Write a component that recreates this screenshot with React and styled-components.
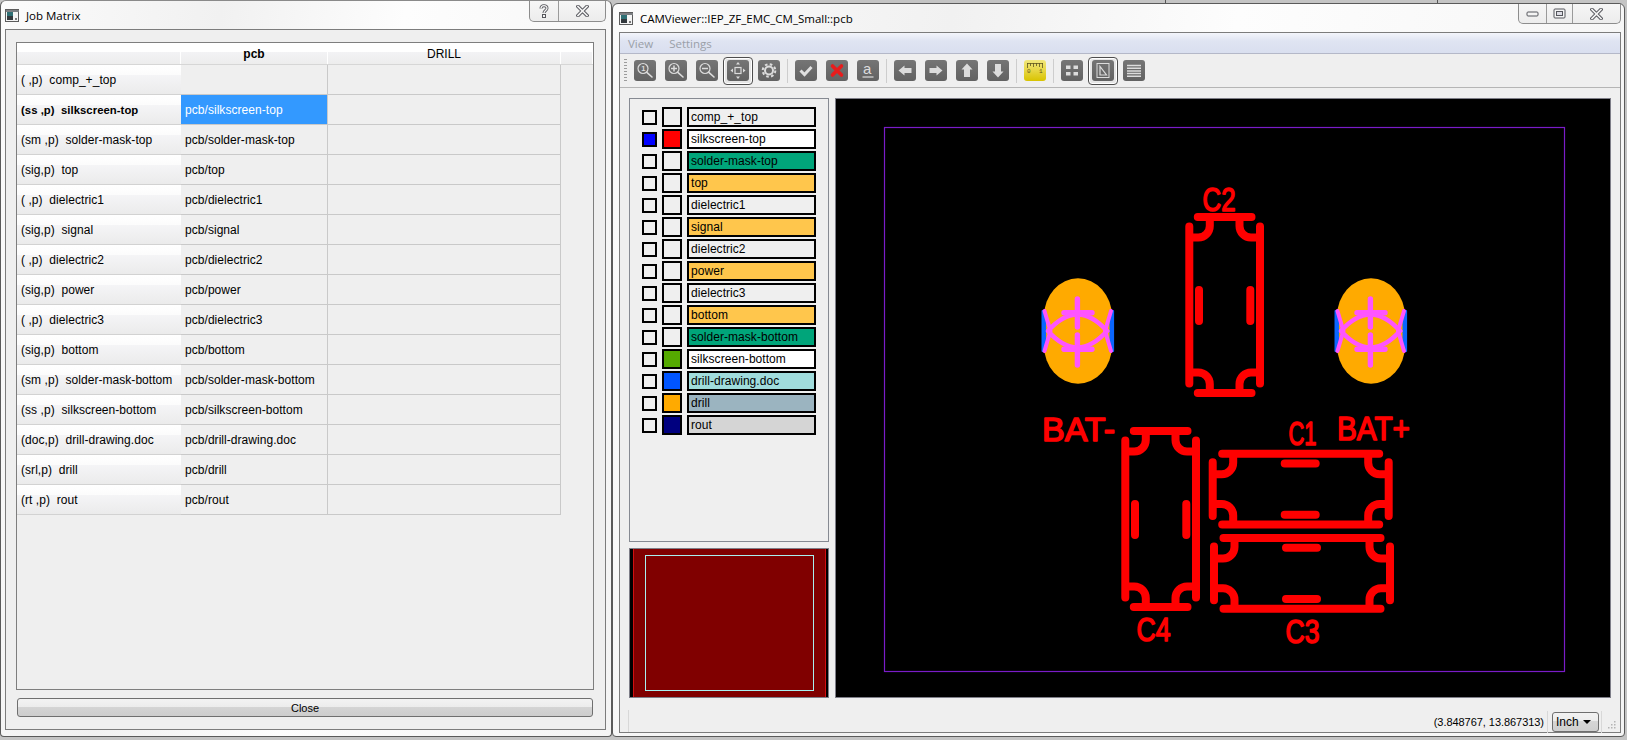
import React from "react";
import styled, { createGlobalStyle } from "styled-components";

const Global = createGlobalStyle`
  html, body { margin: 0; padding: 0; width: 1627px; height: 740px; overflow: hidden; }
  body { font-family: "Liberation Sans", Arial, sans-serif; font-size: 12px; color: #000; }
`;

const Desktop = styled.div`
  width: 1627px; height: 740px; display: flex; align-items: flex-start; overflow: hidden;
  background:
    linear-gradient(#555, #555) 1437px 0 / 1px 3px no-repeat,
    linear-gradient(#555, #555) 1165px 0 / 1px 3px no-repeat,
    #c4c4c4;
`;
const Win = styled.div`
  box-sizing: border-box;
  border: 1px solid #5a5a5a;
  border-radius: 6px 6px 4px 4px;
  background: linear-gradient(100deg, #fbfbfb 0%, #f1f1f1 30%, #fdfdfd 55%, #f4f4f4 100%);
  display: flex; flex-direction: column;
`;
const JobWin = styled(Win)`
  width: 612px; height: 737px; padding: 0 5px 6px 4px;
  border-top-color: #8a8a8a;
`;
const CamWin = styled(Win)`
  width: 1013px; height: 734px; margin-top: 3px; padding: 0 3px 3px 6px; margin-left: 0;
`;
const TitleBar = styled.div`
  height: 28px; display: flex; align-items: center; gap: 6px; flex: none; position: relative;
  font-family: "Open Sans", sans-serif; font-size: 11.5px; color: #000;
`;
const TitleText = styled.span`
  flex: 1;
`;
const CaptionGroup = styled.div`
  display: flex; align-self: flex-start; height: ${p => p.$h}px;
  border: 1px solid #8d8d8d; border-top: none; border-radius: 0 0 5px 5px;
  background: linear-gradient(#f6f6f6, #ececec);
`;
const CaptionBtn = styled.div`
  width: ${p => p.$w}px; display: flex; align-items: center; justify-content: center;
  border-left: ${p => (p.$first ? "none" : "1px solid #9a9a9a")};
`;
const Frame = styled.div`
  flex: 1; min-height: 0; box-sizing: border-box; background: #efefef; border: 1px solid #7c7c7c;
  display: flex; flex-direction: column;
`;
const JobFrame = styled(Frame)`
  padding: 12px 11px 12px 10px;
`;
const Matrix = styled.div`
  height: 648px; box-sizing: border-box; border: 1px solid #7e7e7e; background: #efefef; flex: none;
`;
const HeadRow = styled.div`
  display: grid; grid-template-columns: 164px 147px 233px 1fr; height: 21px;
  border-bottom: 1px solid #d6d6d6;
`;
const HeadCell = styled.div`
  display: flex; align-items: center; justify-content: center;
  font-weight: ${p => (p.$bold ? 700 : 400)};
  border-right: 1px solid #fff;
  background: linear-gradient(#ffffff 0, #ffffff 42%, #f3f3f5 42%, #ededed 100%);
`;
const MatRow = styled.div`
  display: grid; grid-template-columns: 164px 147px 233px; height: 30px;
`;
const RowHead = styled.div`
  display: flex; align-items: center; padding-left: 4px; white-space: pre; letter-spacing: 0.05px;
  font-weight: ${p => (p.$bold ? 700 : 400)};
  font-size: ${p => (p.$bold ? 11.3 : 12)}px;
  border-bottom: 1px solid #d2d2d2;
  background: linear-gradient(#ffffff 0, #fcfcfc 33%, #f5f5f7 33%, #ebebeb 100%);
`;
const Cell = styled.div`
  display: flex; align-items: center; padding-left: 4px; white-space: pre; letter-spacing: 0.05px;
  border-right: 1px solid #c9c9c9; border-bottom: 1px solid #c9c9c9;
  background: ${p => (p.$sel ? "#3399ff" : "#efefef")};
  color: ${p => (p.$sel ? "#fff" : "#000")};
`;
const CloseButton = styled.div`
  margin: 8px 1px 0 1px; height: 20px; box-sizing: border-box; font-size: 11px;
  border: 1px solid #6f6f6f; border-radius: 3px;
  background: linear-gradient(#f3f3f3 0, #ececec 48%, #d4d4d4 48%, #cdcdcd 100%);
  display: flex; align-items: center; justify-content: center;
`;

const CamFrame = styled(Frame)``;
const MenuBar = styled.div`
  height: 20px; flex: none; display: flex; align-items: center; gap: 16px; padding-left: 8px;
  background: linear-gradient(#f3f5fb 0, #dfe4f2 40%, #d9dfef 100%);
  border-bottom: 1px solid #b4b8c8;
  color: #9aa0a8; font-family: "Open Sans", sans-serif; font-size: 11.5px;
`;
const ToolBar = styled.div`
  height: 34px; box-sizing: border-box; flex: none; display: flex; align-items: center; padding-left: 4px;
  background: #efefef; border-bottom: 1px solid #b5b5b5; position: relative;
`;
const Grip = styled.div`
  width: 3px; height: 24px; flex: none; margin-right: 3px;
  background: repeating-linear-gradient(#9c9c9c 0 1px, transparent 1px 3px);
`;
const Slot = styled.div`
  width: 31px; flex: none; box-sizing: border-box; padding-left: ${p => (p.$on ? 0 : 4)}px; display: flex; align-items: center;
`;
const Pressed = styled.div`
  width: 30px; height: 28px; box-sizing: border-box; border: 1px solid #4e4e4e; border-radius: 4px;
  background: #e6e6e6; box-shadow: inset 0 0 0 1px #fff;
  display: flex; align-items: center; justify-content: center;
`;
const Tool = styled.div`
  width: 22px; height: 21px; border-radius: 3px; flex: none;
  background: ${p => (p.$ruler ? "linear-gradient(#f1e77c, #e8d84a 45%, #d8c300)" : "linear-gradient(#757575, #626262)")};
  display: flex; align-items: center; justify-content: center;
`;
const Sep = styled.div`
  width: 6px; height: 24px; flex: none; display: flex; justify-content: center;
  &::after { content: ""; width: 1px; background: #cdcdcd; margin-left: -2px; }
`;
const Body = styled.div`
  flex: none; height: 600px; display: grid; grid-template-columns: 200px 776px; column-gap: 6px;
  padding: 10px 0 0 9px; background: #efefef;
`;
const Side = styled.div`
  display: flex; flex-direction: column; gap: 6px; height: 600px;
`;
const LayerPanel = styled.div`
  height: 444px; box-sizing: border-box; border: 1px solid #868a92; padding: 8px 0 0 12px;
  display: flex; flex-direction: column; gap: 2px;
`;
const LayerRow = styled.div`
  display: flex; align-items: center; height: 20px;
`;
const Check = styled.div`
  width: 15px; height: 15px; box-sizing: border-box; border: 2px solid #000; margin-right: 5px;
  background: ${p => p.$c || "transparent"};
`;
const Swatch = styled.div`
  width: 20px; height: 20px; box-sizing: border-box; border: 2px solid #000; margin-right: 5px;
  background: ${p => p.$c || "transparent"};
`;
const LayerName = styled.div`
  width: 129px; height: 20px; box-sizing: border-box; border: 2px solid #000; padding-left: 2px;
  display: flex; align-items: center; font-size: 12px; letter-spacing: 0.05px;
  background: ${p => p.$c || "transparent"};
`;
const Preview = styled.div`
  height: 150px; box-sizing: border-box; border: 1px solid #7e7e88; background: #000; padding: 0 2px 0 3px;
  display: flex;
`;
const PreviewBoard = styled.div`
  flex: 1; background: #800000; border-left: 1px solid #d01010; border-right: 1px solid #d01010;
  padding: 6px 11px 6px 11px; display: flex;
`;
const PreviewView = styled.div`
  flex: 1; border: 1px solid #a8f0f0;
`;
const Canvas = styled.div`
  height: 600px; box-sizing: border-box; border: 1px solid #7e7e88; background: #000;
`;
const Board = styled.svg`
  display: block; width: 774px; height: 598px;
`;
const Silk = styled.text`
  font-family: "Liberation Sans", sans-serif; font-size: 34px; fill: #ff0000; stroke: #ff0000; stroke-width: 1.6px; stroke-linejoin: round;
`;
const StatusBar = styled.div`
  flex: 1; min-height: 0; background: #efefef; display: flex; align-items: center; justify-content: flex-end;
  position: relative;
  padding: 13px 0 0 0;
`;
const StatusLead = styled.div`
  position: absolute; left: 8px; top: 12px; width: 1px; height: 22px; background: #d8d8d8;
`;
const Coord = styled.div`
  padding-right: 3px; height: 22px; display: flex; align-items: center; border-right: 1px solid #d8d8d8; margin-right: 4px; font-size: 11px; letter-spacing: -0.05px;
`;
const Combo = styled.div`
  width: 47px; height: 20px; box-sizing: border-box; border: 1px solid #6e6e6e; border-radius: 3px;
  background: linear-gradient(#f2f2f2 0, #ececec 45%, #d6d6d6 45%, #cfcfcf 100%);
  display: flex; align-items: center; justify-content: space-between; padding: 0 7px 0 3px;
  font-size: 12px;
`;
const ComboArrow = styled.div`
  width: 0; height: 0; border-left: 4px solid transparent; border-right: 4px solid transparent; border-top: 4px solid #000;
`;
const StatusSep = styled.div`
  width: 1px; height: 22px; background: #d8d8d8; margin: 0 4px 0 2px;
`;
const SizeGrip = styled.svg`
  width: 11px; height: 11px; align-self: flex-end; margin: 0 3px 2px 0; flex: none;
`;

const AppIcon = () => (
  <svg width="15" height="13" viewBox="0 0 15 13">
    <rect x="0.5" y="0.5" width="13" height="12" fill="#f4f4f4" stroke="#5c5c5c" />
    <rect x="1" y="1" width="13" height="2" fill="#7c7f83" />
    <rect x="2" y="3" width="6" height="8" fill="#2f6f74" />
    <rect x="2" y="7" width="6" height="4" fill="#33393d" />
    <rect x="10" y="9" width="2" height="2" fill="#7a7a7a" />
  </svg>
);
const CloseGlyph = () => (
  <svg width="13" height="12" viewBox="0 0 13 12">
    <path d="M2 1.5L11 10.5M11 1.5L2 10.5" stroke="#55565c" strokeWidth="3.6" strokeLinecap="square" />
    <path d="M2 1.5L11 10.5M11 1.5L2 10.5" stroke="#f4f4f4" strokeWidth="1.7" strokeLinecap="square" />
  </svg>
);
const HelpGlyph = () => (
  <svg width="10" height="15" viewBox="0 0 10 15">
    <path d="M2 4.5C2 .8 8 .8 8 4.2C8 6.5 5 6.5 5 9" fill="none" stroke="#55565c" strokeWidth="3" />
    <path d="M2 4.5C2 .8 8 .8 8 4.2C8 6.5 5 6.5 5 9" fill="none" stroke="#f4f4f4" strokeWidth="1.3" />
    <rect x="3.5" y="10.5" width="3" height="3" fill="#f4f4f4" stroke="#55565c" />
  </svg>
);
const MinGlyph = () => (
  <svg width="13" height="6" viewBox="0 0 13 6"><rect x="1" y="1" width="11" height="4" rx="1" fill="#f4f4f4" stroke="#55565c" /></svg>
);
const MaxGlyph = () => (
  <svg width="13" height="11" viewBox="0 0 13 11"><rect x="1" y="1" width="11" height="9" rx="1" fill="#f4f4f4" stroke="#55565c" /><rect x="3.5" y="3.5" width="6" height="4" fill="#dcdce4" stroke="#55565c" /></svg>
);

const C = "#dcdcdc";
const Ico = ({ children }) => <svg width="22" height="21" viewBox="0 0 22 21">{children}</svg>;
const Mag = ({ children }) => (
  <Ico>
    <circle cx="9" cy="8.5" r="5" fill="none" stroke={C} strokeWidth="1.2" />
    <path d="M12.8 12.3L18 17" stroke={C} strokeWidth="1.6" strokeLinecap="round" />
    {children}
  </Ico>
);
const Icons = {
  zoom1: <Mag><text x="7.2" y="11" fontSize="7.5" fontWeight="700" fill={C} fontFamily="Liberation Sans">1</text></Mag>,
  zoomIn: <Mag><path d="M6 8.5H12M9 5.5V11.5" stroke={C} strokeWidth="1.5" /></Mag>,
  zoomOut: <Mag><path d="M6 8.5H12" stroke={C} strokeWidth="1.5" /></Mag>,
  pan: (
    <Ico>
      <rect x="8" y="7.5" width="6" height="6" fill="none" stroke={C} strokeWidth="1.2" />
      <path d="M11 2L13 4.5H9ZM11 19L13 16.5H9ZM3.5 10.5L6 8.5V12.5ZM18.5 10.5L16 8.5V12.5Z" fill={C} />
    </Ico>
  ),
  gear: (
    <Ico>
      <circle cx="11" cy="10.5" r="4" fill="none" stroke={C} strokeWidth="2" />
      <circle cx="11" cy="10.5" r="6.3" fill="none" stroke={C} strokeWidth="2" strokeDasharray="2.6 2.35" />
    </Ico>
  ),
  check: <Ico><path d="M5.5 10.5L9.5 14.5L16.5 7" fill="none" stroke="#e0e0e0" strokeWidth="3" /></Ico>,
  cross: <Ico><path d="M6.5 6L15.5 15M15.5 6L6.5 15" stroke="#e81c1c" strokeWidth="3.6" strokeLinecap="round" /></Ico>,
  under: (
    <Ico>
      <text x="6" y="14" fontSize="15" fill={C} fontFamily="Liberation Sans">a</text>
      <path d="M5.5 17H16.5" stroke={C} strokeWidth="1.2" />
    </Ico>
  ),
  left: <Ico><path d="M4.5 10.5L10.5 5.5V8H17.5V13H10.5V15.5Z" fill="#dcdcdc" /></Ico>,
  right: <Ico><path d="M17.5 10.5L11.5 5.5V8H4.5V13H11.5V15.5Z" fill="#dcdcdc" /></Ico>,
  up: <Ico><path d="M11 3.5L16.5 9.5H14V17H8V9.5H5.5Z" fill="#dcdcdc" /></Ico>,
  down: <Ico><path d="M11 17.5L16.5 11.5H14V4H8V11.5H5.5Z" fill="#dcdcdc" /></Ico>,
  ruler: (
    <Ico>
      <path d="M3 3.5H19M3.5 3V8M6.5 3V6M9.5 3V7M12.5 3V6M15.5 3V7M18.5 3V8" fill="none" stroke="#5e5520" strokeWidth="0.8" />
      <text x="3" y="13" fontSize="6" fill="#5e5520" fontFamily="Liberation Mono">0</text>
      <text x="15" y="13" fontSize="6" fill="#5e5520" fontFamily="Liberation Mono">1</text>
    </Ico>
  ),
  grid: (
    <Ico>
      <path d="M5 5.5H9.5V9H5ZM12.5 5.5H17V9H12.5ZM5 12H9.5V15.5H5ZM12.5 12H17V15.5H12.5Z" fill={C} />
    </Ico>
  ),
  sketch: (
    <Ico>
      <rect x="5" y="3.5" width="12" height="14" fill="none" stroke={C} strokeWidth="1" />
      <path d="M8 6.5V15H14.5Z" fill="none" stroke={C} strokeWidth="1.2" />
    </Ico>
  ),
  list: (
    <Ico>
      <path d="M4 5.5H18M4 8.2H18M4 10.9H18M4 13.6H18M4 16.2H18" stroke={C} strokeWidth="1.5" />
    </Ico>
  ),
};

const toolbar = [
  ["zoom1"], ["zoomIn"], ["zoomOut"], ["pan", true], ["gear"], "|",
  ["check"], ["cross"], ["under"], "|",
  ["left"], ["right"], ["up"], ["down"], "|",
  ["ruler"], "|",
  ["grid"], ["sketch", true], ["list"],
];

const rows = [
  ["( ,p)", "comp_+_top", false],
  ["(ss ,p)", "silkscreen-top", true],
  ["(sm ,p)", "solder-mask-top", true],
  ["(sig,p)", "top", true],
  ["( ,p)", "dielectric1", true],
  ["(sig,p)", "signal", true],
  ["( ,p)", "dielectric2", true],
  ["(sig,p)", "power", true],
  ["( ,p)", "dielectric3", true],
  ["(sig,p)", "bottom", true],
  ["(sm ,p)", "solder-mask-bottom", true],
  ["(ss ,p)", "silkscreen-bottom", true],
  ["(doc,p)", "drill-drawing.doc", true],
  ["(srl,p)", "drill", true],
  ["(rt ,p)", "rout", true],
];

const GOLD = "#ffc64c";
const TEAL = "#00a57a";
const layers = [
  ["comp_+_top"],
  ["silkscreen-top", "#fff", "#0000ff", "#ff0000"],
  ["solder-mask-top", TEAL],
  ["top", GOLD],
  ["dielectric1"],
  ["signal", GOLD],
  ["dielectric2"],
  ["power", GOLD],
  ["dielectric3"],
  ["bottom", GOLD],
  ["solder-mask-bottom", TEAL],
  ["silkscreen-bottom", "#fff", null, "#55aa00"],
  ["drill-drawing.doc", "#a0dcdc", null, "#0055ff"],
  ["drill", "#9bb4c0", null, "#ffaa00"],
  ["rout", "#d5d5d5", null, "#00007f"],
];

const capPath = [
  "M8.5 0H62.2", "M8.5 176H62.2", "M0 9.5V166.5", "M70.7 9.5V166.5",
  "M20.5 0V9A11.5 11.5 0 0 1 9 20.5H0",
  "M50.2 0V9A11.5 11.5 0 0 0 61.7 20.5H70.7",
  "M20.5 176V167A11.5 11.5 0 0 0 9 155.5H0",
  "M50.2 176V167A11.5 11.5 0 0 1 61.7 155.5H70.7",
  "M9.7 73V104", "M61 73V104",
].join("");

const Cap = ({ x, y, rot }) => (
  <path
    d={capPath}
    transform={rot ? `translate(${x + 176} ${y}) rotate(90)` : `translate(${x} ${y})`}
    fill="none" stroke="#ff0000" strokeWidth="8" strokeLinecap="round"
  />
);

const Via = ({ dx }) => (
  <g transform={`translate(${dx} 0)`}>
    <rect x="1044" y="278.3" width="68" height="105.4" rx="34" ry="38" fill="#ffaa00" />
    <rect x="1041.5" y="310" width="4.6" height="42" rx="1" fill="#0a66ff" />
    <rect x="1109.5" y="310" width="4.6" height="42" rx="1" fill="#0a66ff" />
    <g fill="none" stroke="#ff55ff" strokeLinecap="round">
      <path d="M1077.4 299V327M1077.4 335V365" strokeWidth="5.4" />
      <path d="M1064 312.7H1092M1064 349.3H1092" strokeWidth="5.4" />
      <path d="M1048 331Q1077.4 298 1107 331Q1077.4 364 1048 331" strokeWidth="4.6" />
      <path d="M1044.5 311Q1048 323 1050.5 331Q1048 339 1044.5 351" strokeWidth="4" />
      <path d="M1111 311Q1107.5 323 1105 331Q1107.5 339 1111 351" strokeWidth="4" />
    </g>
  </g>
);

const silk = [
  ["C2", 1202.5, 211, 33],
  ["BAT-", 1042, 441, 73],
  ["BAT+", 1337, 440, 73],
  ["C1", 1288.5, 445, 28],
  ["C4", 1136.5, 641, 34],
  ["C3", 1285.5, 642.5, 34],
];

export default function App() {
  return (
    <Desktop>
      <Global />
      <JobWin>
        <TitleBar>
          <AppIcon />
          <TitleText>Job Matrix</TitleText>
          <CaptionGroup $h={20}>
            <CaptionBtn $w={28} $first><HelpGlyph /></CaptionBtn>
            <CaptionBtn $w={46}><CloseGlyph /></CaptionBtn>
          </CaptionGroup>
        </TitleBar>
        <JobFrame>
          <Matrix>
            <HeadRow>
              <HeadCell />
              <HeadCell $bold>pcb</HeadCell>
              <HeadCell>DRILL</HeadCell>
              <HeadCell />
            </HeadRow>
            {rows.map(([kind, name, mapped]) => {
              const bold = name === "silkscreen-top";
              return (
                <MatRow key={name}>
                  <RowHead $bold={bold}>{`${kind}  ${name}`}</RowHead>
                  <Cell $sel={bold}>{mapped ? `pcb/${name}` : ""}</Cell>
                  <Cell />
                </MatRow>
              );
            })}
          </Matrix>
          <CloseButton>Close</CloseButton>
        </JobFrame>
      </JobWin>
      <CamWin>
        <TitleBar>
          <AppIcon />
          <TitleText>CAMViewer::IEP_ZF_EMC_CM_Small::pcb</TitleText>
          <CaptionGroup $h={19}>
            <CaptionBtn $w={27} $first><MinGlyph /></CaptionBtn>
            <CaptionBtn $w={25}><MaxGlyph /></CaptionBtn>
            <CaptionBtn $w={47}><CloseGlyph /></CaptionBtn>
          </CaptionGroup>
        </TitleBar>
        <CamFrame>
          <MenuBar>
            <span>View</span>
            <span>Settings</span>
          </MenuBar>
          <ToolBar>
            <Grip />
            {toolbar.map((t, i) =>
              t === "|" ? (
                <Sep key={i} />
              ) : (
                <Slot key={i} $on={t[1]}>
                  {t[1] ? (
                    <Pressed><Tool>{Icons[t[0]]}</Tool></Pressed>
                  ) : (
                    <Tool $ruler={t[0] === "ruler"}>{Icons[t[0]]}</Tool>
                  )}
                </Slot>
              )
            )}
          </ToolBar>
          <Body>
            <Side>
              <LayerPanel>
                {layers.map(([name, bg, chk, sw]) => (
                  <LayerRow key={name}>
                    <Check $c={chk} />
                    <Swatch $c={sw} />
                    <LayerName $c={bg}>{name}</LayerName>
                  </LayerRow>
                ))}
              </LayerPanel>
              <Preview>
                <PreviewBoard><PreviewView /></PreviewBoard>
              </Preview>
            </Side>
            <Canvas>
              <Board viewBox="836 99 774 598">
                <rect x="884.5" y="127.5" width="680" height="544" fill="none" stroke="#7a1cc8" strokeWidth="1.2" />
                <Via dx={0} />
                <Via dx={293} />
                <Cap x={1189.3} y={217} />
                <Cap x={1125.3} y={431} />
                <Cap x={1212.7} y={453.7} rot />
                <Cap x={1214} y={538} rot />
                {silk.map(([t, x, y, w]) => (
                  <Silk key={t} x={x} y={y} textLength={w} lengthAdjust="spacingAndGlyphs">{t}</Silk>
                ))}
              </Board>
            </Canvas>
          </Body>
          <StatusBar>
            <StatusLead />
            <Coord>(3.848767, 13.867313)</Coord>
            <Combo>Inch<ComboArrow /></Combo>
            <StatusSep />
            <SizeGrip viewBox="0 0 11 11">
              <path d="M8 2h1.5v1.5H8zM5 5h1.5v1.5H5zM8 5h1.5v1.5H8zM2 8h1.5v1.5H2zM5 8h1.5v1.5H5zM8 8h1.5v1.5H8z" fill="#b4b4b4" />
            </SizeGrip>
          </StatusBar>
        </CamFrame>
      </CamWin>
    </Desktop>
  );
}
